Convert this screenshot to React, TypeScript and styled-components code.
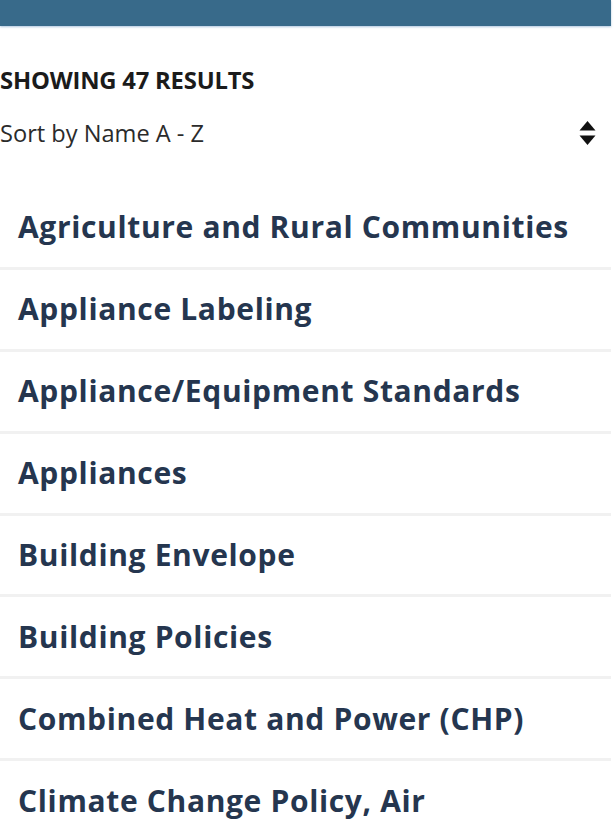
import React from "react";
import styled, { createGlobalStyle } from "styled-components";

const Global = createGlobalStyle`
  html, body { margin: 0; padding: 0; background: #ffffff; }
  * { box-sizing: border-box; }
`;

const Page = styled.div`
  width: 611px;
  font-family: "Open Sans", "Noto Sans", sans-serif;
`;

const TopBar = styled.div`
  height: 26px;
  background: #386a8a;
  box-shadow: 0 1px 2px rgba(120, 160, 200, 0.6);
`;

const Summary = styled.div`
  padding-top: 39px;
`;

const Count = styled.div`
  font-size: 23.8px;
  line-height: 30px;
  font-weight: 700;
  color: #1b1b1b;
  text-transform: uppercase;
  letter-spacing: -0.2px;
`;

const SortRow = styled.div`
  display: flex;
  align-items: center;
  justify-content: space-between;
  margin-top: 23px;
  padding-right: 15px;
  height: 30px;
`;

const SortLabel = styled.span`
  font-size: 23.6px;
  line-height: 30px;
  color: #2b2b2b;
`;

const SortIcon = styled.svg`
  width: 17px;
  height: 26px;
  display: block;
`;

const List = styled.ul`
  list-style: none;
  margin: 40px 0 0;
  padding: 0;
`;

const Item = styled.li`
  padding: 20.45px 18px;
  border-bottom: 3px solid #f1f1f1;
  font-size: 30px;
  line-height: 38px;
  font-weight: 700;
  color: #25364f;
  letter-spacing: 0.65px;
  white-space: nowrap;
`;

const items = [
  "Agriculture and Rural Communities",
  "Appliance Labeling",
  "Appliance/Equipment Standards",
  "Appliances",
  "Building Envelope",
  "Building Policies",
  "Combined Heat and Power (CHP)",
  "Climate Change Policy, Air",
];

export default function App() {
  return (
    <Page>
      <Global />
      <TopBar />
      <Summary>
        <Count>Showing 47 results</Count>
        <SortRow>
          <SortLabel>Sort by Name A - Z</SortLabel>
          <SortIcon viewBox="0 0 17 26" aria-hidden="true">
            <path d="M8.5 1 L16.5 10.5 H0.5 Z" fill="#111" strokeLinejoin="round" />
            <path d="M8.5 25 L16.5 15.5 H0.5 Z" fill="#111" strokeLinejoin="round" />
          </SortIcon>
        </SortRow>
      </Summary>
      <List>
        {items.map((t) => (
          <Item key={t}>{t}</Item>
        ))}
      </List>
    </Page>
  );
}
